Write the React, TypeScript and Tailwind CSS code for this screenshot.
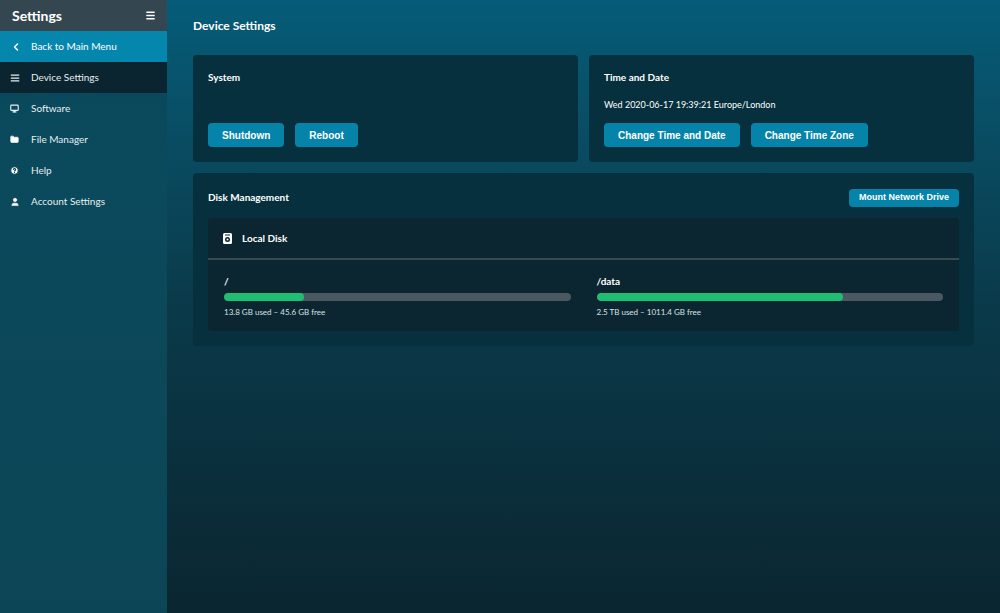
import { ChevronLeft, Menu, Folder, HelpCircle, User, Monitor, AlignJustify } from "lucide-react"

const font = { fontFamily: "Lato, 'Liberation Sans', sans-serif" }

function NavItem({ icon, label, active }: { icon: React.ReactNode; label: string; active?: boolean }) {
    return (
        <div className={`h-[31px] flex items-center pl-[10px] text-[10px] text-[#e6eef0] ${active ? 'bg-[#0b2530]' : ''}`}>
            <span className="w-[21px] flex items-center">{icon}</span>
            {label}
        </div>
    )
}

function Btn({ children }: { children: React.ReactNode }) {
    return (
        <button className="h-[24px] px-[14px] rounded bg-[#0683a8] text-white text-[10px] font-bold" style={{ fontFamily: "'Liberation Sans', Arial, sans-serif" }}>
            {children}
        </button>
    )
}

function Usage({ label, pct, text }: { label: string; pct: number; text: string }) {
    return (
        <div className="flex-1">
            <div className="text-[10px] font-bold text-white mb-[4px]">{label}</div>
            <div className="h-[8px] rounded bg-[#4b5862] overflow-hidden">
                <div className="h-full bg-[#1fbf73] rounded" style={{ width: `${pct}%` }} />
            </div>
            <div className="text-[8px] text-[#d8e2e6] mt-[5px]">{text}</div>
        </div>
    )
}

export default function App() {
    return (
        <div className="flex w-[1000px] h-[613px] overflow-hidden" style={font}>
            <aside className="w-[167px] shrink-0 bg-gradient-to-b from-[#0a4a5e] to-[#0c4656]">
                <div className="h-[31px] bg-[#344751] flex items-center justify-between pl-[12px] pr-[11px]">
                    <span className="text-white font-bold text-[14px]">Settings</span>
                    <Menu className="w-[11px] h-[11px] text-white" strokeWidth={3} />
                </div>
                <div className="h-[31px] bg-[#0586ad] flex items-center pl-[10px] text-[10px] text-white">
                    <span className="w-[21px]"><ChevronLeft className="w-[12px] h-[12px]" strokeWidth={3} /></span>
                    Back to Main Menu
                </div>
                <NavItem active icon={<AlignJustify className="w-[10px] h-[10px]" strokeWidth={3} />} label="Device Settings" />
                <NavItem icon={<Monitor className="w-[9px] h-[9px]" strokeWidth={3} />} label="Software" />
                <NavItem icon={<Folder className="w-[9px] h-[9px] fill-white" strokeWidth={2} />} label="File Manager" />
                <NavItem icon={<HelpCircle className="w-[9px] h-[9px] fill-white text-[#0b4a5c]" strokeWidth={3} />} label="Help" />
                <NavItem icon={<User className="w-[10px] h-[10px] fill-white" strokeWidth={2} />} label="Account Settings" />
            </aside>
            <main className="flex-1 bg-gradient-to-b from-[#055c78] via-[#0a3a4a] to-[#0a2630] px-[26px] pt-[17px]">
                <h1 className="text-white font-bold text-[12px] mb-[20px]">Device Settings</h1>
                <div className="flex gap-[11px] mb-[11px]">
                    <div className="flex-1 h-[107px] rounded bg-[#06303d] p-[15px] flex flex-col">
                        <div className="text-white font-bold text-[10px]">System</div>
                        <div className="flex-1" />
                        <div className="flex gap-[11px]"><Btn>Shutdown</Btn><Btn>Reboot</Btn></div>
                    </div>
                    <div className="flex-1 h-[107px] rounded bg-[#06303d] p-[15px] flex flex-col">
                        <div className="text-white font-bold text-[10px]">Time and Date</div>
                        <div className="text-white text-[9px] mt-[13px]">Wed 2020-06-17 19:39:21 Europe/London</div>
                        <div className="flex-1" />
                        <div className="flex gap-[11px]"><Btn>Change Time and Date</Btn><Btn>Change Time Zone</Btn></div>
                    </div>
                </div>
                <div className="rounded bg-[#06303d] px-[15px] pt-[16px] pb-[15px]">
                    <div className="flex items-center justify-between h-[17px] mb-[12px]">
                        <span className="text-white font-bold text-[10px]">Disk Management</span>
                        <button className="h-[18px] px-[10px] rounded bg-[#0683a8] text-white text-[9px] font-bold" style={{ fontFamily: "'Liberation Sans', Arial, sans-serif" }}>Mount Network Drive</button>
                    </div>
                    <div className="rounded bg-[#0b2630]">
                        <div className="h-[42px] flex items-center pl-[15px] border-b-2 border-[#3a4a52] text-white font-bold text-[10px]">
                            <svg width="9" height="11" viewBox="0 0 9 11" className="mr-[10px]"><rect x="0" y="0" width="9" height="11" rx="1.5" fill="white" /><circle cx="4.5" cy="6.5" r="2.5" fill="#0b2630" /><circle cx="4.5" cy="6.5" r="1" fill="white" /><rect x="2" y="1.5" width="5" height="1" fill="#0b2630" /></svg>
                            Local Disk
                        </div>
                        <div className="flex gap-[26px] px-[16px] pt-[14px] pb-[13px]">
                            <Usage label="/" pct={23} text="13.8 GB used – 45.6 GB free" />
                            <Usage label="/data" pct={71} text="2.5 TB used – 1011.4 GB free" />
                        </div>
                    </div>
                </div>
            </main>
        </div>
    )
}
